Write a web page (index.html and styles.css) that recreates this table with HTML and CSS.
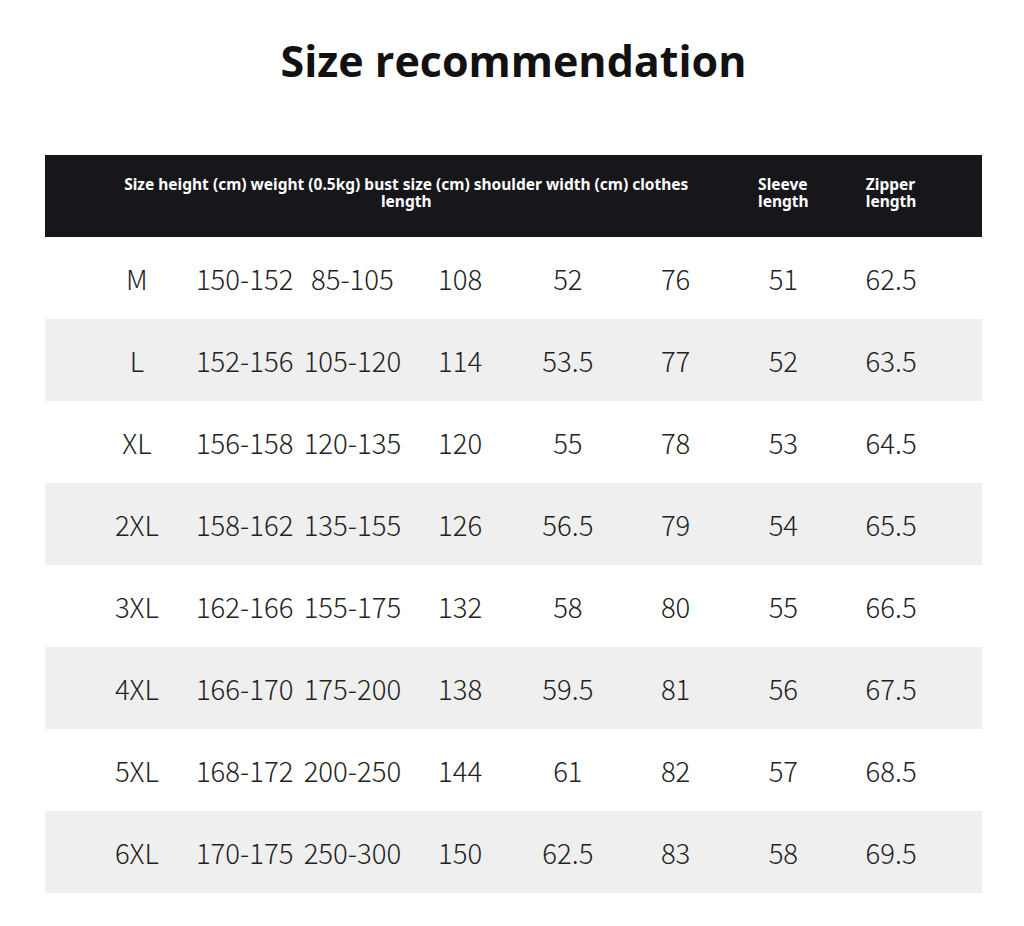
FILE: index.html
```html
<!DOCTYPE html>
<html lang="en">
<head>
<meta charset="utf-8">
<title>Size recommendation</title>
<link rel="stylesheet" href="styles.css">
</head>
<body>
<main class="page">
  <h1 class="title">Size recommendation</h1>
  <div class="chart">
    <div class="head">
      <div class="head-main">Size height (cm) weight (0.5kg) bust size (cm) shoulder width (cm) clothes<br>length</div>
      <div class="head-cell"><span>Sleeve<br>length</span></div>
      <div class="head-cell"><span>Zipper<br>length</span></div>
    </div>
    <div class="row"><span>M</span><span>150-152</span><span>85-105</span><span>108</span><span>52</span><span>76</span><span>51</span><span>62.5</span></div>
    <div class="row alt"><span>L</span><span>152-156</span><span>105-120</span><span>114</span><span>53.5</span><span>77</span><span>52</span><span>63.5</span></div>
    <div class="row"><span>XL</span><span>156-158</span><span>120-135</span><span>120</span><span>55</span><span>78</span><span>53</span><span>64.5</span></div>
    <div class="row alt"><span>2XL</span><span>158-162</span><span>135-155</span><span>126</span><span>56.5</span><span>79</span><span>54</span><span>65.5</span></div>
    <div class="row"><span>3XL</span><span>162-166</span><span>155-175</span><span>132</span><span>58</span><span>80</span><span>55</span><span>66.5</span></div>
    <div class="row alt"><span>4XL</span><span>166-170</span><span>175-200</span><span>138</span><span>59.5</span><span>81</span><span>56</span><span>67.5</span></div>
    <div class="row"><span>5XL</span><span>168-172</span><span>200-250</span><span>144</span><span>61</span><span>82</span><span>57</span><span>68.5</span></div>
    <div class="row alt"><span>6XL</span><span>170-175</span><span>250-300</span><span>150</span><span>62.5</span><span>83</span><span>58</span><span>69.5</span></div>
  </div>
</main>
</body>
</html>
```
FILE: styles.css
```css
html, body {
  margin: 0;
  padding: 0;
  background: #ffffff;
}

.page {
  width: 1024px;
  height: 926px;
  padding: 0 42px 0 45px;
  box-sizing: border-box;
}

.title {
  margin: 0;
  padding-top: 30px;
  height: 155px;
  box-sizing: border-box;
  text-align: center;
  font-family: "Open Sans", "Noto Sans", sans-serif;
  font-weight: 700;
  font-size: 43px;
  line-height: 62px;
  color: #111111;
}

.chart {
  width: 937px;
}

.head {
  display: grid;
  grid-template-columns: repeat(8, 1fr);
  padding: 0 37px 6px 38px;
  height: 82px;
  box-sizing: border-box;
  background: #17171b;
  color: #ffffff;
  font-family: "Noto Sans", "Open Sans", sans-serif;
  font-weight: 700;
  font-size: 15.5px;
  line-height: 17px;
  align-items: center;
}

.head-main {
  grid-column: 1 / span 6;
  text-align: center;
  white-space: nowrap;
}

.head-cell {
  text-align: center;
}

.head-cell span {
  display: inline-block;
  text-align: left;
}

.row {
  display: grid;
  grid-template-columns: repeat(8, 1fr);
  padding: 0 37px 0 38px;
  height: 82px;
  align-items: center;
  font-family: "Noto Sans CJK SC", "Noto Sans", sans-serif;
  font-weight: 300;
  font-size: 27.5px;
  color: #222222;
}

.row span {
  text-align: center;
  white-space: nowrap;
}

.row.alt {
  background: #efefef;
}
```
